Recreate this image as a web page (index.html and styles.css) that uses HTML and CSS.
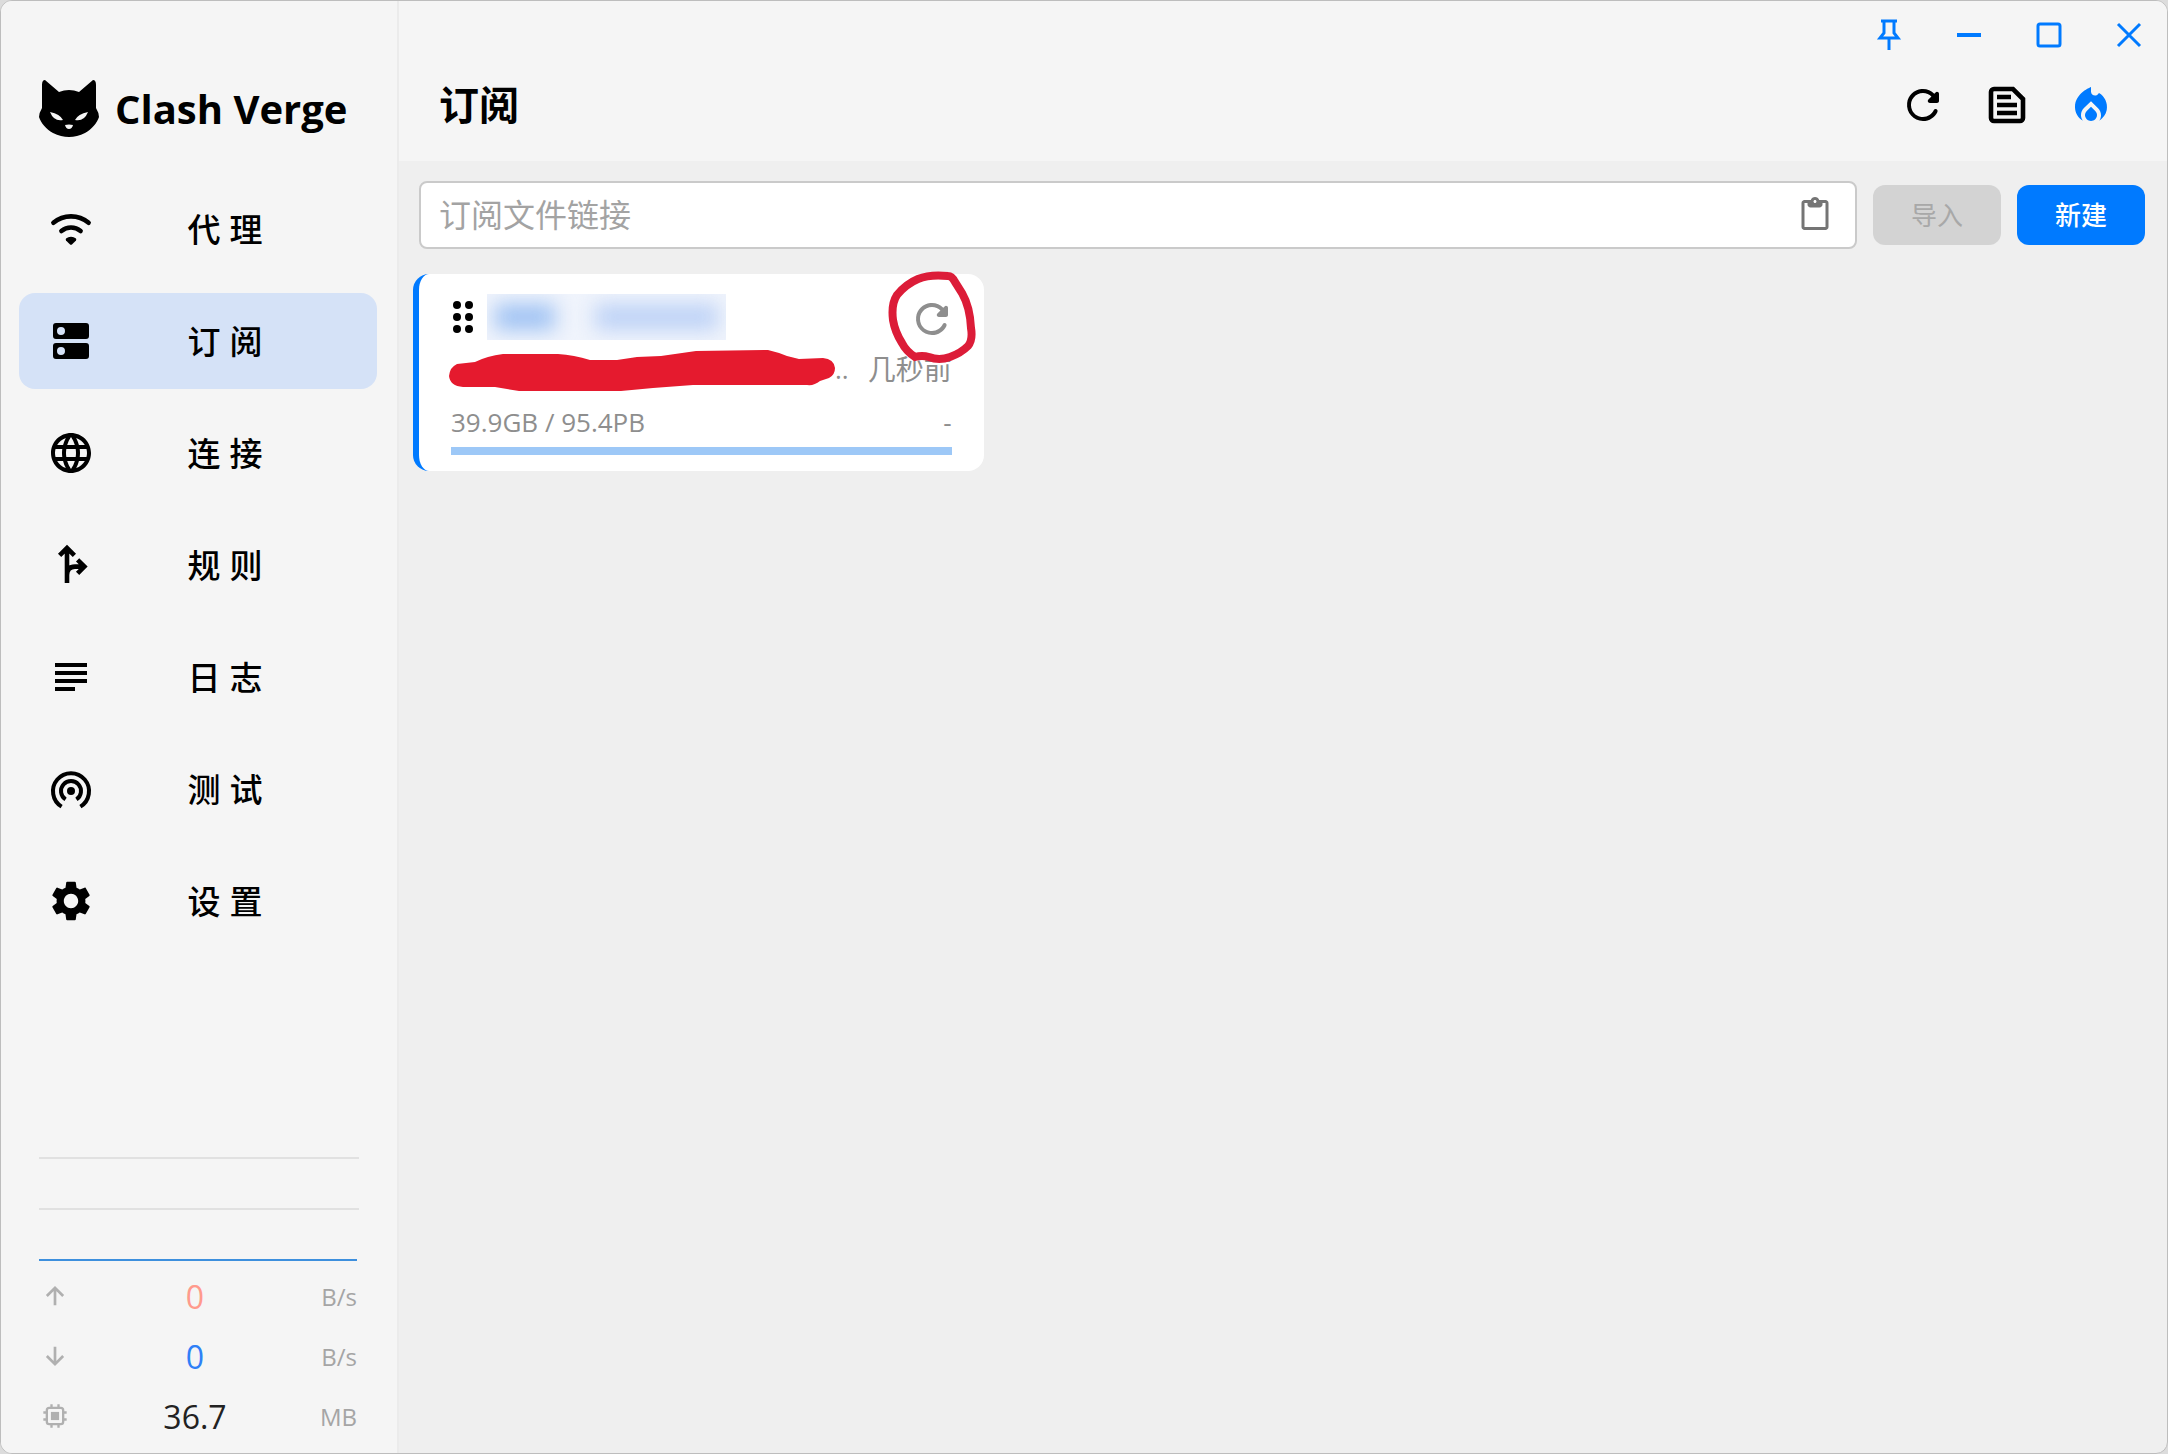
FILE: index.html
```html
<!DOCTYPE html>
<html lang="zh-CN">
<head>
    <meta charset="UTF-8">
    <meta name="viewport" content="width=device-width, initial-scale=1.0">
    <title>Clash Verge</title>
    <link rel="stylesheet" href="styles.css">
</head>
<body>

    <div class="window">
        <!-- Sidebar -->
        <aside class="sidebar">
            <div class="logo">
                <svg class="logo-cat" viewBox="0 0 60 57" aria-hidden="true">
                    <path d="M6 0 Q3 0 3 5 L3 28 Q0 33 0 37 C2 43 7 49 14 53 Q22 57 30 57 Q38 57 46 53 C53 49 58 43 60 37 Q60 33 57 28 L57 5 Q57 0 54 0 L40 12 Q30 8 20 12 Z"/>
                    <path fill="#f5f5f5" d="M11 32 Q21 34 24 40 Q15 42 11 32 Z M49 32 Q39 34 36 40 Q45 42 49 32 Z M26 45 Q30 44 34 45 Q33 49 30 49 Q27 49 26 45 Z"/>
                </svg>
                <span>Clash Verge</span>
            </div>

            <nav class="menu">
                <a href="#" class="menu-item">
                    <svg class="icon" viewBox="0 0 24 24"><path class="line round" d="M3.2 8.9a13.6 13.6 0 0 1 17.6 0M7.2 13a7.5 7.5 0 0 1 9.6 0"/><path d="M9.5 16.8a3.7 3.7 0 0 1 5 0q.3.5 0 .9l-1.9 1.9q-.6.5-1.2 0l-1.9-1.9q-.3-.4 0-.9z"/></svg>
                    <span>代 理</span>
                </a>
                <a href="#" class="menu-item active">
                    <svg class="icon" viewBox="0 0 24 24"><path fill-rule="evenodd" d="M4.500 3h15a1.500 1.500 0 0 1 1.500 1.500v5a1.500 1.500 0 0 1-1.500 1.500h-15a1.500 1.500 0 0 1-1.500-1.500v-5a1.500 1.500 0 0 1 1.500-1.500zM7 5a2 2 0 1 0 0 4 2 2 0 0 0 0-4zM4.500 13h15a1.500 1.500 0 0 1 1.500 1.500v5a1.500 1.500 0 0 1-1.500 1.500h-15a1.500 1.500 0 0 1-1.500-1.500v-5a1.500 1.500 0 0 1 1.500-1.500zM7 15a2 2 0 1 0 0 4 2 2 0 0 0 0-4z"/></svg>
                    <span>订 阅</span>
                </a>
                <a href="#" class="menu-item">
                    <svg class="icon" viewBox="0 0 24 24"><path d="M11.990 2C6.470 2 2 6.480 2 12s4.470 10 9.990 10C17.520 22 22 17.520 22 12S17.520 2 11.990 2zm6.930 6h-2.950c-.32-1.250-.78-2.450-1.380-3.560 1.840.63 3.370 1.910 4.330 3.560zM12 4.040c.83 1.200 1.480 2.530 1.910 3.960h-3.820c.43-1.430 1.080-2.760 1.910-3.960zM4.260 14C4.100 13.360 4 12.690 4 12s.1-1.360.26-2h3.380c-.08.66-.14 1.320-.14 2s.06 1.340.14 2H4.260zm.82 2h2.950c.32 1.250.78 2.450 1.380 3.560-1.840-.63-3.370-1.900-4.330-3.560zm2.950-8H5.080c.96-1.660 2.490-2.930 4.330-3.560C8.810 5.550 8.350 6.750 8.030 8zM12 19.960c-.83-1.200-1.480-2.530-1.910-3.960h3.820c-.43 1.430-1.080 2.760-1.910 3.960zM14.340 14H9.660c-.09-.66-.16-1.320-.16-2s.07-1.350.16-2h4.680c.09.65.16 1.320.16 2s-.07 1.340-.16 2zm.25 5.560c.6-1.110 1.060-2.310 1.380-3.560h2.950c-.96 1.650-2.490 2.930-4.330 3.560zM16.360 14c.08-.66.14-1.320.14-2s-.06-1.340-.14-2h3.380c.16.64.26 1.310.26 2s-.1 1.360-.26 2h-3.380z"/></svg>
                    <span>连 接</span>
                </a>
                <a href="#" class="menu-item">
                    <svg class="icon" viewBox="0 0 24 24"><path class="line" d="M10 4v17M6.300 7.200L10 3.500l3.700 3.700M10 17q0-4.200 4-4.200h4.500M15.300 9.400l3.400 3.400-3.400 3.400"/></svg>
                    <span>规 则</span>
                </a>
                <a href="#" class="menu-item">
                    <svg class="icon" viewBox="0 0 24 24"><path class="line thin" d="M4 6h16M4 10h16M4 14h16M4 18h10"/></svg>
                    <span>日 志</span>
                </a>
                <a href="#" class="menu-item">
                    <svg class="icon" viewBox="0 0 24 24"><path class="line thin" d="M7.300 20.800a9 9 0 1 1 9.400 0M9.300 17.200a5 5 0 1 1 5.400 0"/><circle cx="12" cy="13" r="2"/></svg>
                    <span>测 试</span>
                </a>
                <a href="#" class="menu-item">
                    <svg class="icon" viewBox="0 0 24 24"><path d="M19.140 12.940c.04-.3.06-.61.06-.94 0-.32-.02-.64-.07-.94l2.030-1.580c.18-.14.23-.41.12-.61l-1.920-3.320c-.12-.22-.37-.29-.59-.22l-2.390.96c-.5-.38-1.030-.7-1.620-.94l-.36-2.540c-.04-.24-.24-.41-.48-.41h-3.840c-.24 0-.43.17-.47.41l-.36 2.540c-.59.24-1.130.57-1.620.94l-2.390-.96c-.22-.08-.47 0-.59.22L2.740 8.870c-.12.21-.08.47.12.61l2.030 1.580c-.05.3-.09.63-.09.94s.02.64.07.94l-2.030 1.580c-.18.14-.23.41-.12.61l1.920 3.320c.12.22.37.29.59.22l2.390-.96c.5.38 1.030.7 1.620.94l.36 2.540c.05.24.24.41.48.41h3.840c.24 0 .44-.17.47-.41l.36-2.540c.59-.24 1.130-.56 1.620-.94l2.390.96c.22.08.47 0 .59-.22l1.920-3.320c.12-.22.07-.47-.12-.61l-2.010-1.580zM12 15.600c-1.980 0-3.600-1.620-3.600-3.600s1.620-3.600 3.600-3.600 3.600 1.620 3.600 3.600-1.620 3.600-3.600 3.600z"/></svg>
                    <span>设 置</span>
                </a>
            </nav>

            <!-- Traffic graph and counters -->
            <div class="traffic">
                <div class="graph">
                    <div class="graph-line"></div>
                    <div class="graph-line"></div>
                    <div class="graph-value"></div>
                </div>
                <div class="traffic-row">
                    <svg class="icon-small" viewBox="0 0 24 24"><path class="line" d="M12 20V5M5 12l7-7 7 7"/></svg>
                    <span class="value up">0</span>
                    <span class="unit">B/s</span>
                </div>
                <div class="traffic-row">
                    <svg class="icon-small" viewBox="0 0 24 24"><path class="line" d="M12 4v15M5 12l7 7 7-7"/></svg>
                    <span class="value down">0</span>
                    <span class="unit">B/s</span>
                </div>
                <div class="traffic-row">
                    <svg class="icon-small" viewBox="0 0 24 24"><rect class="line thin" x="5" y="5" width="14" height="14" rx="2"/><path class="line thin" d="M9 2v3M15 2v3M9 19v3M15 19v3M2 9h3M2 15h3M19 9h3M19 15h3"/><rect x="8.500" y="8.500" width="7" height="7"/></svg>
                    <span class="value">36.7</span>
                    <span class="unit">MB</span>
                </div>
            </div>
        </aside>

        <!-- Page -->
        <main class="page">
            <header class="page-header">
                <div class="window-controls">
                    <button type="button" aria-label="Pin"><svg viewBox="0 0 32 32"><path d="M8 2h16M11 2v12l-4 5h18l-4-5V2M16 19v12"/></svg></button>
                    <button type="button" aria-label="Minimize"><svg viewBox="0 0 32 32"><path class="bold" d="M4 16h24"/></svg></button>
                    <button type="button" aria-label="Maximize"><svg viewBox="0 0 32 32"><rect x="5" y="5" width="22" height="22" rx="2"/></svg></button>
                    <button type="button" aria-label="Close"><svg viewBox="0 0 32 32"><path d="M5 5l22 22M27 5L5 27"/></svg></button>
                </div>
                <div class="title-row">
                    <h1>订阅</h1>
                    <div class="actions">
                        <button type="button" aria-label="Update all"><svg class="icon" viewBox="0 0 24 24"><path d="M17.650 6.350c-1.630-1.630-3.940-2.570-6.480-2.310-3.670.37-6.690 3.350-7.100 7.020C3.520 15.910 7.270 20 12 20c3.190 0 5.930-1.870 7.210-4.560.32-.67-.16-1.440-.9-1.440-.37 0-.72.2-.88.53-1.130 2.430-3.840 3.970-6.800 3.310-2.220-.49-4.010-2.300-4.480-4.520C5.310 9.440 8.260 6 12 6c1.660 0 3.140.69 4.220 1.780l-1.510 1.510c-.63.63-.19 1.710.7 1.710H19c.55 0 1-.45 1-1V6.410c0-.89-1.080-1.340-1.710-.71l-.64.65z"/></svg></button>
                        <button type="button" aria-label="View config"><svg class="icon" viewBox="0 0 24 24"><path class="line" d="M5.500 4H15l5 5v9.500a1.500 1.500 0 0 1-1.500 1.500h-13A1.500 1.500 0 0 1 4 18.500v-13A1.500 1.500 0 0 1 5.500 4zM7 8h7M7 12h10M7 16h10"/></svg></button>
                        <button type="button" class="fire" aria-label="Reactivate"><svg class="icon" viewBox="0 0 24 24"><path d="M12 12.900l-2.130 2.090C9.310 15.550 9 16.280 9 17.060 9 18.680 10.350 20 12 20s3-1.320 3-2.940c0-.78-.31-1.520-.87-2.070L12 12.900z"/><path d="M16 6l-.44.55C14.380 8.020 12 7.190 12 5.300V3S4 6 4 13c0 2.920 1.560 5.470 3.890 6.860-.56-.79-.89-1.760-.89-2.800 0-1.320.52-2.560 1.470-3.500L12 10.100l3.530 3.470c.95.93 1.470 2.170 1.470 3.500 0 1.020-.31 1.960-.85 2.750 1.890-1.150 3.290-3.060 3.710-5.300.66-3.550-1.070-6.900-3.860-8.520z"/></svg></button>
                    </div>
                </div>
            </header>

            <section class="content">
                <form class="import-form">
                    <div class="url-field">
                        <input type="text" id="profile-url" placeholder="订阅文件链接" aria-label="订阅文件链接">
                        <button type="button" class="paste" aria-label="Paste"><svg viewBox="0 0 24 24"><path d="M19 2h-4.180C14.400.84 13.300 0 12 0S9.600.84 9.180 2H5c-1.100 0-2 .9-2 2v16c0 1.100.9 2 2 2h14c1.100 0 2-.9 2-2V4c0-1.100-.9-2-2-2zm-7 0c.55 0 1 .45 1 1s-.45 1-1 1-1-.45-1-1 .45-1 1-1zm7 18H5V4h2v1c0 1.100.9 2 2 2h6c1.100 0 2-.9 2-2V4h2v16z"/></svg></button>
                    </div>
                    <button type="submit" class="btn" disabled>导入</button>
                    <button type="button" class="btn btn-primary">新建</button>
                </form>

                <div class="profiles">
                    <article class="profile-card">
                        <div class="profile-head">
                            <svg class="icon" viewBox="0 0 24 24"><circle cx="9" cy="6" r="2"/><circle cx="15" cy="6" r="2"/><circle cx="9" cy="12" r="2"/><circle cx="15" cy="12" r="2"/><circle cx="9" cy="18" r="2"/><circle cx="15" cy="18" r="2"/></svg>
                            <div class="profile-name"><i class="smudge"></i><i class="smudge wide"></i></div>
                            <button type="button" class="refresh" aria-label="Update"><svg class="icon" viewBox="0 0 24 24"><path d="M17.650 6.350c-1.630-1.630-3.940-2.570-6.480-2.310-3.670.37-6.690 3.350-7.100 7.020C3.520 15.910 7.270 20 12 20c3.190 0 5.930-1.870 7.210-4.560.32-.67-.16-1.440-.9-1.440-.37 0-.72.2-.88.53-1.130 2.430-3.840 3.970-6.800 3.310-2.220-.49-4.010-2.300-4.480-4.520C5.310 9.440 8.260 6 12 6c1.660 0 3.140.69 4.220 1.780l-1.510 1.510c-.63.63-.19 1.710.7 1.710H19c.55 0 1-.45 1-1V6.410c0-.89-1.080-1.340-1.710-.71l-.64.65z"/></svg></button>
                        </div>
                        <div class="profile-source">
                            <svg class="scribble" viewBox="0 0 386 42" aria-hidden="true"><path d="M0 26Q1 17 8 14L26 12Q38 6 54 4H109Q125 5 141 10H168L188 7 212 6 247 1 319 0Q328 2 338 6L350 9 374 8Q385 9 386 18 386 25 380 28L371 31Q365 36 358 35H244L204 38 172 41H70L46 37H14Q1 36 0 26Z"/></svg>
                            <span class="dots">..</span>
                            <span class="updated">几秒前</span>
                        </div>
                        <div class="profile-usage">
                            <span>39.9GB / 95.4PB</span>
                            <span>-</span>
                        </div>
                        <div class="usage-bar"></div>
                        <svg class="marker" viewBox="0 0 88 94" aria-hidden="true"><path d="M5 50Q3 34 9 25 18 14 30 9 42 4 60 6 64 6 67 12L74 23Q82 37 83 58 85 70 80 76 73 83 62 87 51 91 41 87 34 85 27 87 18 81 14 73 7 62 5 50Z"/></svg>
                    </article>
                </div>
            </section>
        </main>
    </div>

</body>
</html>
```

FILE: styles.css
```css
:root {
    --primary: #007aff;
    --panel: #f5f5f5;
    --background: #efefef;
    --muted: #8e8e8e;
    --marker: #dc1c38;
}

* {
    margin: 0;
    padding: 0;
    box-sizing: border-box;
}

body {
    font-family: "Open Sans", "Noto Sans CJK SC", sans-serif;
    color: #000;
    background-color: #dcdcdc;
}

button {
    border: none;
    background: none;
    font: inherit;
    color: inherit;
    cursor: pointer;
}

svg {
    display: block;
    flex-shrink: 0;
    fill: currentColor;
}

.icon {
    width: 48px;
    height: 48px;
}

.line {
    fill: none;
    stroke: currentColor;
    stroke-width: 2.3;
}

.thin {
    stroke-width: 2;
}

.round {
    stroke-linecap: round;
}

.window {
    display: flex;
    min-height: 100vh;
    border: 1px solid #bdbdbd;
    border-radius: 12px;
    background-color: var(--background);
    overflow: hidden;
}

/* Sidebar */
.sidebar {
    display: flex;
    flex-direction: column;
    flex-shrink: 0;
    width: 398px;
    background-color: var(--panel);
    border-right: 2px solid #ebebeb;
}

.logo {
    display: flex;
    align-items: center;
    gap: 16px;
    height: 180px;
    padding: 34px 0 0 38px;
    font-size: 40px;
    font-weight: bold;
    white-space: nowrap;
}

.logo-cat {
    width: 60px;
    height: 57px;
}

.menu {
    display: flex;
    flex-direction: column;
    gap: 16px;
    padding: 0 20px 0 18px;
}

.menu-item {
    display: flex;
    align-items: center;
    height: 96px;
    padding: 0 22px 0 28px;
    border-radius: 16px;
    font-family: "Liberation Sans", "Noto Sans CJK SC", sans-serif;
    font-size: 33px;
    font-weight: 500;
    color: #000;
    text-decoration: none;
}

.menu-item span {
    flex: 1;
    padding-bottom: 2px;
    text-align: center;
}

.menu-item.active {
    background-color: #d5e2f7;
}

.traffic {
    margin-top: auto;
    padding: 0 38px 7px;
}

.graph {
    margin-bottom: 5px;
}

.graph-line {
    height: 51px;
    border-top: 2px solid #e1e1e1;
}

.graph-value {
    height: 2px;
    margin-right: 2px;
    background-color: #3d8fdd;
}

.traffic-row {
    display: flex;
    align-items: center;
    height: 60px;
    padding-right: 2px;
}

.icon-small {
    width: 32px;
    height: 28px;
    color: #b0b0b0;
}

.value {
    flex: 1;
    padding-left: 10px;
    font-size: 32px;
    color: #222;
    text-align: center;
}

.value.up {
    color: #ff9a8c;
}

.value.down {
    color: #2f80f7;
}

.unit {
    width: 48px;
    font-size: 24px;
    color: #a5a5a5;
    text-align: right;
}

/* Page header */
.page {
    flex: 1;
    min-width: 0;
}

.page-header {
    height: 160px;
    background-color: var(--panel);
}

.window-controls {
    display: flex;
    justify-content: flex-end;
    height: 68px;
    margin-right: -2px;
    color: var(--primary);
}

.window-controls button {
    display: flex;
    align-items: center;
    justify-content: center;
    width: 80px;
}

.window-controls svg {
    width: 32px;
    height: 32px;
    fill: none;
    stroke: currentColor;
    stroke-width: 3;
}

.window-controls .bold {
    stroke-width: 4;
}

.title-row {
    display: flex;
    align-items: center;
    justify-content: space-between;
    height: 72px;
    padding: 0 52px 0 40px;
}

.title-row h1 {
    font-size: 40px;
    line-height: 48px;
}

.actions {
    display: flex;
    gap: 36px;
}

.fire {
    color: var(--primary);
}

/* Import bar */
.content {
    padding: 20px 22px 20px 14px;
}

.import-form {
    display: flex;
    align-items: center;
    gap: 16px;
    padding-left: 6px;
}

.url-field {
    display: flex;
    align-items: center;
    flex: 1;
    height: 68px;
    padding: 0 22px 0 18px;
    border: 2px solid #cacaca;
    border-radius: 8px;
    background-color: #fff;
}

.url-field input {
    flex: 1;
    min-width: 0;
    border: none;
    outline: none;
    background: none;
    font: inherit;
    font-size: 32px;
    line-height: 48px;
}

.url-field input::placeholder {
    color: #a3a3a3;
    opacity: 1;
}

.paste svg {
    width: 36px;
    height: 36px;
    color: #757575;
}

.btn {
    width: 128px;
    height: 60px;
    border-radius: 12px;
    font-size: 26px;
    line-height: 40px;
}

.btn:disabled {
    background-color: #d3d3d3;
    color: #a8a8a8;
    cursor: default;
}

.btn-primary {
    background-color: var(--primary);
    color: #fff;
    font-weight: 500;
}

/* Profiles */
.profiles {
    display: grid;
    grid-template-columns: repeat(3, 1fr);
    gap: 10px;
    padding-top: 25px;
}

.profile-card {
    position: relative;
    padding: 18px 32px 16px;
    border-left: 6px solid var(--primary);
    border-radius: 16px;
    background-color: #fff;
    color: var(--muted);
    font-size: 26px;
    line-height: 36px;
}

.profile-head {
    display: flex;
    align-items: center;
    height: 50px;
}

.profile-head > .icon {
    margin-left: -12px;
    color: #000;
}

.profile-name {
    display: flex;
    gap: 40px;
    width: 239px;
    height: 46px;
    padding: 10px 8px;
    background-color: #f0f4fc;
    overflow: hidden;
}

.smudge {
    width: 60px;
    height: 26px;
    background-color: #9fc2f3;
    filter: blur(10px);
}

.smudge.wide {
    flex: 1;
    background-color: #bdd2f6;
}

.refresh {
    margin-left: auto;
    margin-right: -4px;
    padding-top: 4px;
}

.profile-source {
    display: flex;
    align-items: center;
    height: 54px;
}

.scribble {
    width: 386px;
    height: 42px;
    margin-top: 4px;
    margin-left: -2px;
    color: #e51a2e;
}

.updated {
    margin-left: auto;
    font-size: 28px;
    white-space: nowrap;
}

.profile-usage {
    display: flex;
    justify-content: space-between;
    height: 51px;
    padding-top: 8px;
}

.usage-bar {
    height: 8px;
    background-color: #9dc8f7;
}

.marker {
    position: absolute;
    top: -4px;
    right: 8px;
    width: 88px;
    height: 94px;
    fill: none;
    stroke: var(--marker);
    stroke-width: 8;
}
```
